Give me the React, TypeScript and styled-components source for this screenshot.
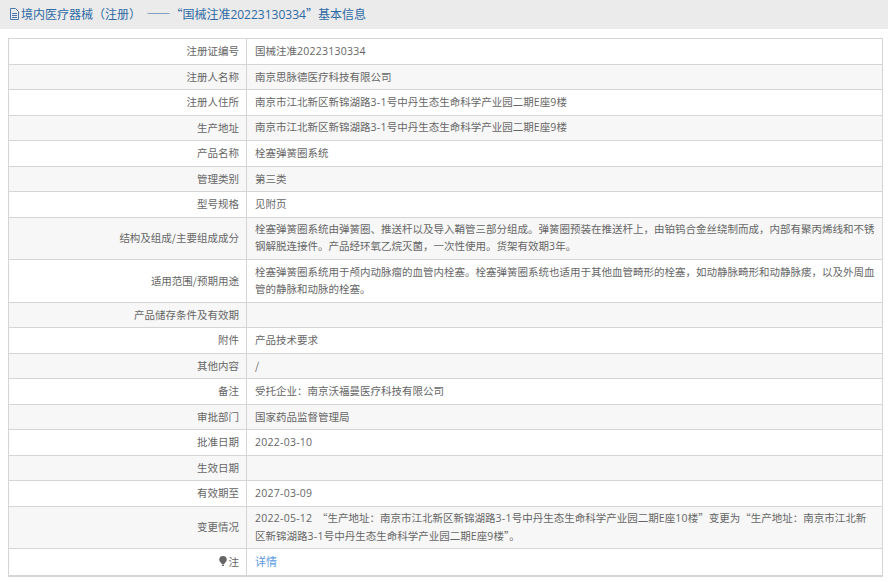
import React from 'react'
import styled, { createGlobalStyle } from 'styled-components'

const rows = [
  { label: '注册证编号', value: '国械注准20223130334' },
  { label: '注册人名称', value: '南京思脉德医疗科技有限公司' },
  { label: '注册人住所', value: '南京市江北新区新锦湖路3-1号中丹生态生命科学产业园二期E座9楼' },
  { label: '生产地址', value: '南京市江北新区新锦湖路3-1号中丹生态生命科学产业园二期E座9楼' },
  { label: '产品名称', value: '栓塞弹簧圈系统' },
  { label: '管理类别', value: '第三类' },
  { label: '型号规格', value: '见附页' },
  {
    label: '结构及组成/主要组成成分',
    value:
      '栓塞弹簧圈系统由弹簧圈、推送杆以及导入鞘管三部分组成。弹簧圈预装在推送杆上，由铂钨合金丝绕制而成，内部有聚丙烯线和不锈钢解脱连接件。产品经环氧乙烷灭菌，一次性使用。货架有效期3年。',
    tall: true,
  },
  {
    label: '适用范围/预期用途',
    value:
      '栓塞弹簧圈系统用于颅内动脉瘤的血管内栓塞。栓塞弹簧圈系统也适用于其他血管畸形的栓塞，如动静脉畸形和动静脉瘘，以及外周血管的静脉和动脉的栓塞。',
    tall: true,
  },
  { label: '产品储存条件及有效期', value: '' },
  { label: '附件', value: '产品技术要求' },
  { label: '其他内容', value: '/' },
  { label: '备注', value: '受托企业：南京沃福曼医疗科技有限公司' },
  { label: '审批部门', value: '国家药品监督管理局' },
  { label: '批准日期', value: '2022-03-10' },
  { label: '生效日期', value: '' },
  { label: '有效期至', value: '2027-03-09' },
  {
    label: '变更情况',
    value:
      '2022-05-12 \u00a0“生产地址：南京市江北新区新锦湖路3-1号中丹生态生命科学产业园二期E座10楼”变更为“生产地址：南京市江北新区新锦湖路3-1号中丹生态生命科学产业园二期E座9楼”。',
    tall: true,
  },
]

// latin runs get a slightly wider face than the CJK font's own digits
const withLatin = (text: string) =>
  text.split(/([0-9A-Za-z-]+)/).map((part, i) => (i % 2 === 1 ? <Latin key={i}>{part}</Latin> : part))

export default function App() {
  return (
    <>
      <GlobalStyle />
      <Header lang="zh-CN">
        <DocIcon width="9" height="12" viewBox="0 0 9 12" fill="none" stroke="#4a78ae" strokeWidth="1">
          <path d="M.5.5h5l3 3v8h-8z" />
          <path d="M2 5.500h5M2 7.500h5M2 9.500h5" />
        </DocIcon>
        <span>
          境内医疗器械（注册）&nbsp;&nbsp;——“国械注准<HeaderLatin>20223130334</HeaderLatin>”基本信息
        </span>
      </Header>
      <Table lang="zh-CN">
        {rows.map((row, i) => (
          <Row key={row.label} $shaded={i % 2 === 1} $tall={row.tall}>
            <Label>{row.label}</Label>
            <Value>{withLatin(row.value)}</Value>
          </Row>
        ))}
        <Row $shaded={false}>
          <Label>
            <svg width="8" height="10" viewBox="0 0 8 10" fill="#666">
              <path d="M4 0a3.800 3.800 0 0 1 3.800 3.800C7.800 6 5.400 7 4.800 8.500H3.200C2.600 7 .2 6 .2 3.800A3.800 3.800 0 0 1 4 0z" />
              <path d="M3 9h2v1H3z" />
            </svg>
            注
          </Label>
          <Value>
            <DetailLink href="#">详情</DetailLink>
          </Value>
        </Row>
      </Table>
    </>
  )
}

const GlobalStyle = createGlobalStyle`
  html, body {
    margin: 0;
    padding: 0;
    background: #fff;
    font-family: "Noto Sans CJK SC", "Liberation Sans", sans-serif;
  }
`

const Latin = styled.span`
  font-family: "Open Sans", "Liberation Sans", sans-serif;
  letter-spacing: 0.25px;
`

const HeaderLatin = styled.span`
  font-family: "Open Sans", "Liberation Sans", sans-serif;
`

const DocIcon = styled.svg`
  flex: none;
  margin-right: 2px;
`

const Header = styled.div`
  display: flex;
  align-items: center;
  box-sizing: border-box;
  height: 28.5px;
  padding: 0 0 1px 10px;
  background: #ebebeb;
  color: #2d6aa5;
  font-size: 12px;
  white-space: nowrap;
`

const Table = styled.div`
  box-sizing: border-box;
  width: 875px;
  margin: 9.5px 0 0 8px;
  border: 1px solid #d5d5d5;
  border-bottom-width: 2px;
  color: #666;
  font-size: 10.5px;
`

const Row = styled.div<{ $shaded: boolean; $tall?: boolean }>`
  display: grid;
  grid-template-columns: 238px 1fr;
  box-sizing: border-box;
  height: ${(p) => (p.$tall ? '42.5px' : '25.5px')};
  background: ${(p) => (p.$shaded ? '#f7f7f7' : '#fff')};
  border-bottom: 1px solid #d5d5d5;

  &:last-child {
    border-bottom: none;
  }
`

const Label = styled.div`
  display: flex;
  align-items: center;
  justify-content: flex-end;
  gap: 2px;
  padding: 0 7px 1px 0;
  border-right: 1px solid #d5d5d5;
`

const Value = styled.div`
  align-self: center;
  padding: 0 7px 1px 8px;
  line-height: 17px;
`

const DetailLink = styled.a`
  color: #5a9ae0;
  font-size: 11px;
  text-decoration: none;
`
